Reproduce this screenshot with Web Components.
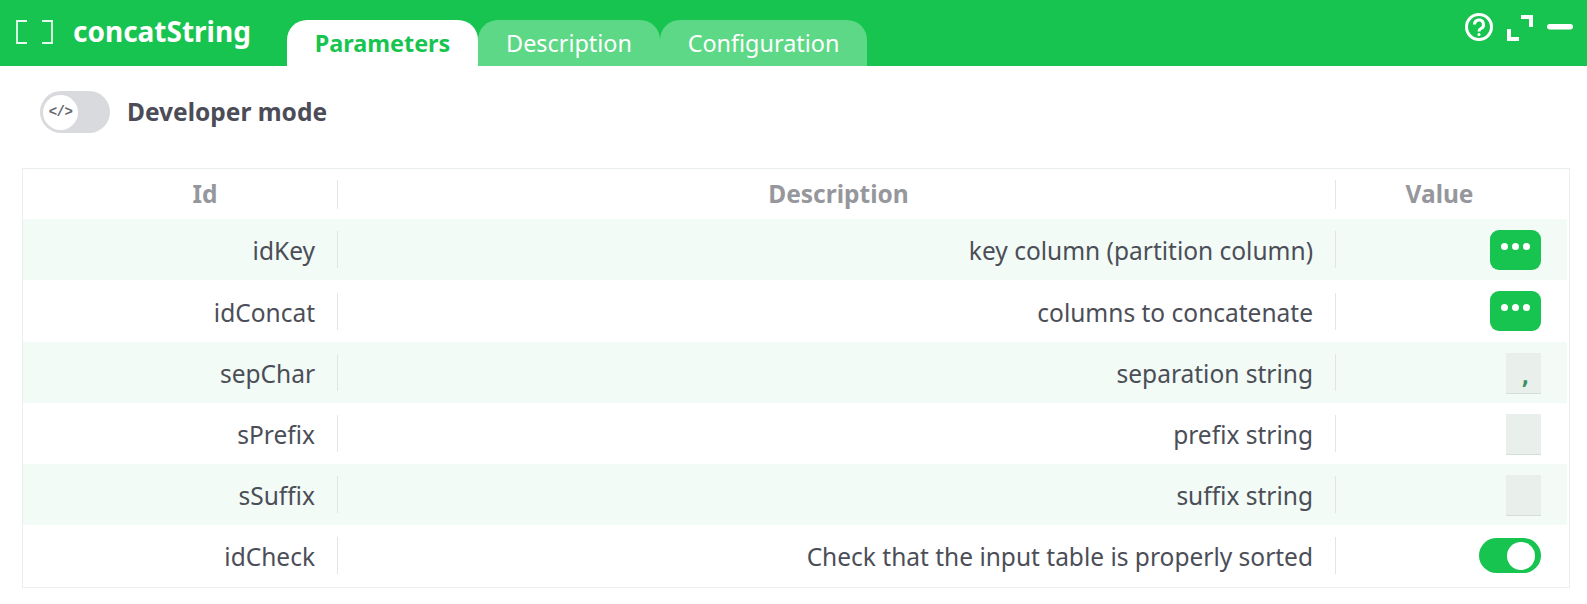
<!DOCTYPE html>
<html>
<head>
<meta charset="utf-8">
<title>concatString</title>
<style>
    html, body { margin: 0; padding: 0; background: #fff; }
    body { font-family: "Noto Sans", sans-serif; width: 1587px; height: 604px; overflow: hidden; }
</style>
</head>
<body>
<node-panel name="concatString">
    <dev-toggle>Developer mode</dev-toggle>
    <param-table>
        <param-row id-name="idKey" description="key column (partition column)" kind="dots"></param-row>
        <param-row id-name="idConcat" description="columns to concatenate" kind="dots"></param-row>
        <param-row id-name="sepChar" description="separation string" kind="input" value=","></param-row>
        <param-row id-name="sPrefix" description="prefix string" kind="input"></param-row>
        <param-row id-name="sSuffix" description="suffix string" kind="input"></param-row>
        <param-row id-name="idCheck" description="Check that the input table is properly sorted" kind="switch"></param-row>
    </param-table>
</node-panel>
<script>
class nodePanel extends HTMLElement {
    constructor() {
        super();
        this.attachShadow({ mode: 'open' });
        this.shadowRoot.innerHTML = `
            <style>
                :host{ display: block; }
                .header{
                    display: flex; align-items: flex-start;
                    height: 66px; background: #18c450; color: #fff;
                }
                .icon{ width: 37px; height: 24px; margin: 20px 20px 0 16px; flex: none; }
                .name{
                    font-size: 28px; font-weight: 700; line-height: 37px;
                    margin: 13px 37px 0 0; width: 177px; white-space: nowrap;
                }
                .tabs{ display: flex; align-self: flex-end; height: 46px; }
                .tab{
                    font-size: 23.4px; line-height: 47px; text-align: center;
                    background: #5dd886; border-radius: 20px 20px 0 0;
                }
                .tab.active{ background: #fff; color: #18c450; font-weight: 700; width: 191px; }
                .tools{ display: flex; align-items: flex-start; margin-left: auto; }
            </style>
            <div class="header">
                <svg class="icon" viewBox="0 0 37 24" fill="none" stroke="#fff" stroke-width="1.8" stroke-opacity="0.9">
                    <path d="M11 1H1V23H11M26 1H36V23H26"/>
                </svg>
                <div class="name"></div>
                <div class="tabs">
                    <div class="tab active">Parameters</div>
                    <div class="tab" style="width:182px">Description</div>
                    <div class="tab" style="width:207px">Configuration</div>
                </div>
                <div class="tools">
                    <svg width="30" height="30" viewBox="0 0 30 30" fill="none" stroke="#fff" stroke-width="3" style="margin:12px 13px 0 0">
                        <circle cx="15" cy="15" r="12.5"/>
                        <path d="M10.5 12.5a4.500 4.500 0 1 1 6.500 4c-1.400.800-2 1.500-2 3"/>
                        <circle cx="15" cy="22.500" r="1.500" fill="#fff" stroke="none"/>
                    </svg>
                    <svg width="26" height="26" viewBox="0 0 26 26" fill="none" stroke="#fff" stroke-width="4" style="margin:15px 14px 0 0">
                        <path d="M14 2H24V12M2 14V24H12"/>
                    </svg>
                    <svg width="26" height="6" viewBox="0 0 26 6" style="margin:24px 14px 0 0">
                        <rect width="26" height="5.500" rx="2.750" fill="#fff"/>
                    </svg>
                </div>
            </div>
            <slot></slot>
        `;
    }
    connectedCallback() {
        this.shadowRoot.querySelector('.name').textContent = this.getAttribute('name');
    }
}
customElements.define('node-panel', nodePanel);

class devToggle extends HTMLElement {
    constructor() {
        super();
        this.attachShadow({ mode: 'open' });
        this.shadowRoot.innerHTML = `
            <style>
                :host{
                    display: flex; align-items: center; gap: 17px;
                    height: 42px; margin: 25px 0 35px 40px;
                    font-size: 24.5px; font-weight: 700; color: #4b4c57;
                }
                .track{
                    display: flex; align-items: center;
                    box-sizing: border-box; width: 70px; height: 42px; padding: 3px;
                    background: #d9dadd; border-radius: 21px;
                }
                .knob{
                    display: flex; align-items: center; justify-content: center;
                    width: 35px; height: 35px; border-radius: 50%; background: #fff;
                    font: 700 14px "Liberation Mono", monospace; color: #66676e; letter-spacing: -0.5px;
                }
                .label{ margin-top: -2px; }
            </style>
            <div class="track"><div class="knob">&lt;/&gt;</div></div>
            <span class="label"><slot></slot></span>
        `;
    }
}
customElements.define('dev-toggle', devToggle);

class paramTable extends HTMLElement {
    constructor() {
        super();
        this.attachShadow({ mode: 'open' });
        this.shadowRoot.innerHTML = `
            <style>
                :host{
                    display: block; box-sizing: border-box;
                    width: 1548px; margin-left: 22px;
                    border: 1px solid #e9efec; padding: 0 2px 1px 0;
                }
                .head{
                    display: grid; grid-template-columns: 315px 998px 1fr;
                    height: 50.3px; align-items: center;
                    font-size: 24.5px; font-weight: 700; color: #96979c; text-align: center;
                }
                .head div{ box-sizing: border-box; height: 29px; line-height: 27px; border-right: 1px solid #dfe6e3; }
                .head div:nth-child(1){ padding-left: 50px; }
                .head div:nth-child(2){ padding-left: 4px; }
                .head div:last-child{ border: none; padding-right: 24px; }
                ::slotted(param-row:nth-child(odd)){ background: #f2fbf6; }
            </style>
            <div class="head"><div>Id</div><div>Description</div><div>Value</div></div>
            <slot></slot>
        `;
    }
}
customElements.define('param-table', paramTable);

class paramRow extends HTMLElement {
    constructor() {
        super();
        this.attachShadow({ mode: 'open' });
        this.shadowRoot.innerHTML = `
            <style>
                :host{
                    display: grid; grid-template-columns: 315px 998px 1fr;
                    height: 61.17px; align-items: center;
                    font-size: 24.5px; color: #4b4e57;
                }
                .cell{
                    height: 37px; line-height: 39px; text-align: right;
                    padding-right: 22px; border-right: 1px solid #dfe6e3;
                }
                .value{ display: flex; justify-content: flex-end; padding-right: 26px; }
                .dots{
                    display: flex; align-items: flex-start; justify-content: center; gap: 4px;
                    box-sizing: border-box; width: 51px; height: 40px; padding-top: 13px;
                    background: #18c450; border-radius: 9px;
                }
                .dots span{ width: 7px; height: 7px; border-radius: 50%; background: #fff; }
                .input{
                    box-sizing: border-box; width: 35px; height: 41px; margin-top: 2px; padding-right: 9px;
                    background: #e9f0ec; border-bottom: 1px solid #d5dfda;
                    text-align: right; overflow: hidden;
                    font: 700 22px/48px "DejaVu Sans Mono", monospace; color: #3d8f5c;
                }
                .switch{
                    display: flex; align-items: center; justify-content: flex-end;
                    box-sizing: border-box; width: 62px; height: 35px; padding-right: 6px;
                    background: #18c450; border-radius: 18px;
                }
                .switch span{ width: 28px; height: 28px; border-radius: 50%; background: #fff; }
            </style>
            <div class="cell id"></div>
            <div class="cell desc"></div>
            <div class="value"></div>
        `;
    }
    connectedCallback() {
        this.shadowRoot.querySelector('.id').textContent = this.getAttribute('id-name');
        this.shadowRoot.querySelector('.desc').textContent = this.getAttribute('description');
        const value = this.shadowRoot.querySelector('.value');
        const kind = this.getAttribute('kind');
        if (kind === 'dots') {
            value.innerHTML = '<div class="dots"><span></span><span></span><span></span></div>';
        }
        if (kind === 'input') {
            value.innerHTML = '<div class="input"></div>';
            value.firstChild.textContent = this.getAttribute('value') || '';
        }
        if (kind === 'switch') {
            value.innerHTML = '<div class="switch"><span></span></div>';
        }
    }
}
customElements.define('param-row', paramRow);
</script>
</body>
</html>
